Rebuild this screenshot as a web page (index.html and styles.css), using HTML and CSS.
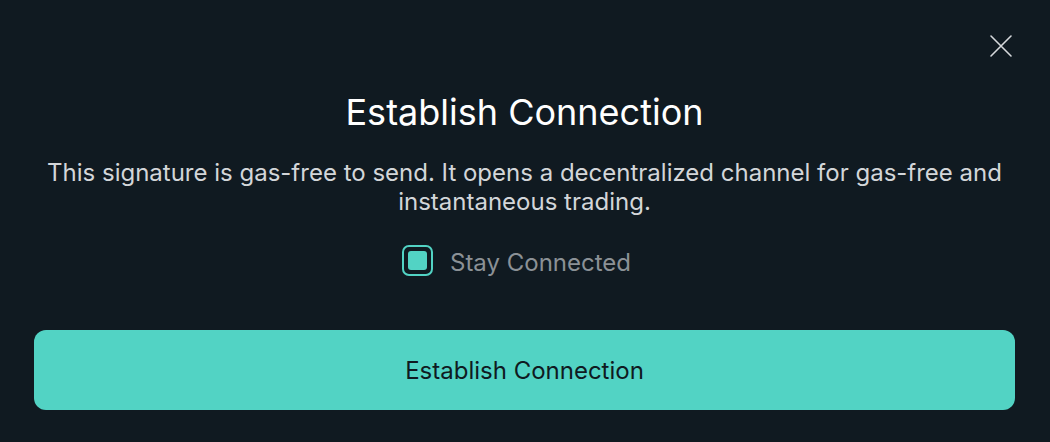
FILE: index.html
```html
<!DOCTYPE html>
<html lang="en">
<head>
  <meta charset="UTF-8" />
  <title>Establish Connection</title>
  <meta name="viewport" content="width=device-width, initial-scale=1" />
  <link rel="stylesheet" href="styles.css">
</head>
<body>
  <div class="modal">
    <button class="close-btn" aria-label="Close">
      <svg width="24" height="24" viewBox="0 0 24 24" fill="none" stroke="#d6d9dc" stroke-width="1.6" stroke-linecap="round">
        <path d="M2 2L22 22M22 2L2 22" />
      </svg>
    </button>
    <h2 class="title">Establish Connection</h2>
    <p class="desc">This signature is gas-free to send. It opens a decentralized channel for gas-free and instantaneous trading.</p>
    <label class="stay">
      <span class="check"><span class="check-fill"></span></span>
      <span class="stay-text">Stay Connected</span>
    </label>
    <button class="main-btn">Establish Connection</button>
  </div>
</body>
</html>
```

FILE: styles.css
```css
* { box-sizing: border-box; font-family: Inter, 'Noto Sans', sans-serif; }
body { margin: 0; background: #101a21; color: #fff; }
.modal {
  position: relative; width: 1050px; height: 442px;
  padding: 88px 35px 0 34px;
  display: flex; flex-direction: column; align-items: center;
}
.close-btn {
  position: absolute; right: 37px; top: 34px;
  background: none; border: none; padding: 0; cursor: pointer;
  width: 24px; height: 24px;
}
.title {
  margin: 0; font-size: 36px; font-weight: 400; line-height: 48px;
  color: #fff;
}
.desc {
  margin: 22px 0 0; font-size: 24px; line-height: 29px;
  text-align: center; color: #d3d6d9; max-width: 980px;
}
.stay {
  margin: 29px 16px 0 0; display: flex; align-items: center; gap: 17px;
  font-size: 24px; color: #8b9196; cursor: pointer;
}
.stay-text { padding-top: 4px; line-height: 27px; }
.check {
  width: 31px; height: 31px; border: 2px solid #52d3c4; border-radius: 7px;
  padding: 4px; display: flex;
}
.check-fill {
  flex: 1; background: #52d3c4; border-radius: 3px;
}
.main-btn {
  margin-top: 54px; width: 100%; height: 80px;
  background: #52d3c4; color: #0f1a21; border: none; border-radius: 12px;
  font-size: 24px; font-weight: 400; cursor: pointer;
}
```
